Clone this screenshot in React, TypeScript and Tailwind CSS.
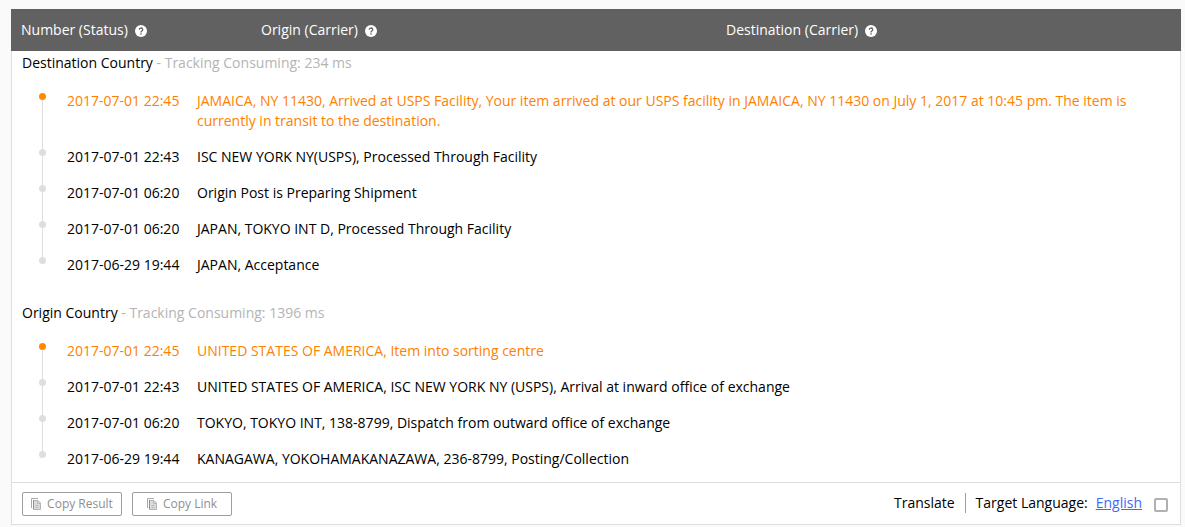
import React from 'react';

interface TrackEvent {
  time: string;
  text: string;
}

interface TrackSection {
  title: string;
  consuming: string;
  events: TrackEvent[];
}

const sections: TrackSection[] = [
  {
    title: 'Destination Country',
    consuming: '234 ms',
    events: [
      {
        time: '2017-07-01 22:45',
        text: 'JAMAICA, NY 11430, Arrived at USPS Facility, Your item arrived at our USPS facility in JAMAICA, NY 11430 on July 1, 2017 at 10:45 pm. The item is currently in transit to the destination.',
      },
      { time: '2017-07-01 22:43', text: 'ISC NEW YORK NY(USPS), Processed Through Facility' },
      { time: '2017-07-01 06:20', text: 'Origin Post is Preparing Shipment' },
      { time: '2017-07-01 06:20', text: 'JAPAN, TOKYO INT D, Processed Through Facility' },
      { time: '2017-06-29 19:44', text: 'JAPAN, Acceptance' },
    ],
  },
  {
    title: 'Origin Country',
    consuming: '1396 ms',
    events: [
      { time: '2017-07-01 22:45', text: 'UNITED STATES OF AMERICA, Item into sorting centre' },
      { time: '2017-07-01 22:43', text: 'UNITED STATES OF AMERICA, ISC NEW YORK NY (USPS), Arrival at inward office of exchange' },
      { time: '2017-07-01 06:20', text: 'TOKYO, TOKYO INT, 138-8799, Dispatch from outward office of exchange' },
      { time: '2017-06-29 19:44', text: 'KANAGAWA, YOKOHAMAKANAZAWA, 236-8799, Posting/Collection' },
    ],
  },
];

const HelpIcon: React.FC = () => (
  <svg className="h-3 w-3" viewBox="0 0 12 12" aria-hidden="true">
    <circle cx="6" cy="6" r="6" fill="#fff" />
    <path d="M4.3 4.7a1.7 1.6 0 1 1 2.6 1.3C6.2 6.4 6 6.7 6 7.4" fill="none" stroke="#616161" strokeWidth="1.3" />
    <rect x="5.3" y="8.3" width="1.4" height="1.3" fill="#616161" />
  </svg>
);

const CopyIcon: React.FC = () => (
  <svg className="h-3 w-[10px]" viewBox="0 0 10 12" aria-hidden="true">
    <path d="M.5 10V.5H7" fill="none" stroke="#a8a8a8" />
    <path d="M2.5 11.5v-9h4.5l2.5 2.5v6.5z" fill="#dcdcdc" stroke="#b4b4b4" />
    <path d="M2.5 2v9" fill="none" stroke="#8f8f8f" />
    <path d="M6.5 3v2.5H9M4.5 7.5h3M4.5 9.5h3" fill="none" stroke="#b8b8b8" />
  </svg>
);

const HeaderCell: React.FC<{ label: string }> = ({ label }) => (
  <div className="flex items-center gap-[7px] pl-[10px]">
    <span>{label}</span>
    <button type="button" aria-label={`Help: ${label}`} className="mt-[2px]">
      <HelpIcon />
    </button>
  </div>
);

const CopyButton: React.FC<{ label: string }> = ({ label }) => (
  <button
    type="button"
    className="flex h-6 w-[100px] items-center justify-center gap-[6px] rounded-xs border border-[#9e9e9e] text-xs text-[#8f8f8f]"
  >
    <CopyIcon />
    {label}
  </button>
);

const Timeline: React.FC<{ events: TrackEvent[] }> = ({ events }) => (
  <ol className="mt-[10px]">
    {events.map((event, i) => {
      const latest = i === 0;
      const oldest = i === events.length - 1;
      return (
        <li key={i} className={`flex pr-10 pl-[27px] ${latest ? 'text-[#ff7f00]' : 'text-black'}`}>
          {/* dot with the line running through it */}
          <div className="flex w-[7px] shrink-0 flex-col items-center">
            <span className={`h-[10px] w-px ${latest ? '' : 'bg-[#dedede]'}`} />
            <span className={`h-[7px] w-[7px] rounded-full ${latest ? 'bg-[#ff8a00]' : 'bg-[#dedede]'}`} />
            <span className={`w-px flex-1 ${oldest ? '' : 'bg-[#dedede]'}`} />
          </div>
          <time className="ml-[21px] w-[130px] shrink-0 py-2">{event.time}</time>
          <p className="py-2">{event.text}</p>
        </li>
      );
    })}
  </ol>
);

const App: React.FC = () => (
  <div className="min-h-screen bg-[#fafafa] pt-[9px] pr-1 pb-[2px] pl-[11px] font-['Open_Sans',sans-serif] text-sm leading-5 text-black">
    <header className="grid h-[42px] grid-cols-[240px_1fr_1fr] bg-[#616161] font-medium text-white">
      <HeaderCell label="Number (Status)" />
      <HeaderCell label="Origin (Carrier)" />
      <HeaderCell label="Destination (Carrier)" />
    </header>
    <main className="border border-t-0 border-[#dedede] bg-white">
      <div className="flex flex-col gap-5 pt-[2px] pb-[5px]">
        {sections.map((section) => (
          <section key={section.title}>
            <h2 className="pl-[10px]">
              {section.title} <span className="text-[#b4b4b4]">- Tracking Consuming: {section.consuming}</span>
            </h2>
            <Timeline events={section.events} />
          </section>
        ))}
      </div>
      <footer className="flex items-center justify-between border-t border-[#dedede] pt-[9px] pr-3 pb-2 pl-[10px]">
        <div className="flex gap-[10px]">
          <CopyButton label="Copy Result" />
          <CopyButton label="Copy Link" />
        </div>
        <div className="flex items-center pb-[2px]">
          <label htmlFor="translate" className="border-r border-[#9e9e9e] pr-[10px]">Translate</label>
          <span className="pl-[10px]">Target Language:</span>
          <a href="#language" className="ml-2 text-[#3d6bfa] underline">English</a>
          <input
            id="translate"
            type="checkbox"
            className="mt-1 ml-3 h-[14px] w-[14px] appearance-none rounded-xs border-2 border-[#b0b0b0] bg-white checked:bg-[#3d6bfa]"
          />
        </div>
      </footer>
    </main>
  </div>
);

export default App;
